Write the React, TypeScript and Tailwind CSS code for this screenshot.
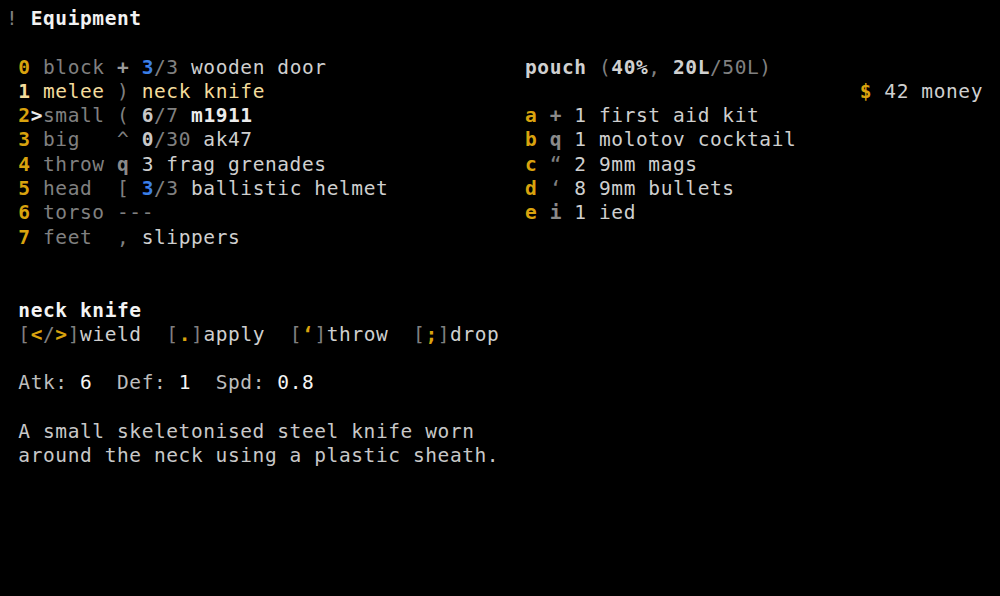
const gold = "text-[#d9a30e] font-bold";
const dim = "text-[#808080]";
const lite = "text-[#cfcfcf]";
const bright = "text-[#ececec] font-bold";
const blue = "text-[#3b7fe8] font-bold";
const pale = "text-[#f4dc9c]";

type Seg = [string, string];

function Line({ segs, className = "" }: { segs: Seg[]; className?: string }) {
  return (
    <div className={"h-[24.3px] leading-[24.3px] whitespace-pre " + className}>
      {segs.map(([t, c], i) => (
        <span key={i} className={c}>
          {t}
        </span>
      ))}
    </div>
  );
}

const slots: Seg[][] = [
  [["0", gold], [" block ", dim], ["+", "text-[#9a9a9a] font-bold"], [" ", lite], ["3", blue], ["/3", dim], [" wooden door", lite]],
  [["1", "text-[#f4dc9c] font-bold"], [" melee ", pale], [")", dim], [" neck knife", pale]],
  [["2", gold], [">", bright], ["small ", dim], ["(", dim], [" ", lite], ["6", "text-[#c8c8c8] font-bold"], ["/7", dim], [" ", lite], ["m1911", bright]],
  [["3", gold], [" big   ", dim], ["^", dim], [" ", lite], ["0", "text-[#c8c8c8] font-bold"], ["/30", dim], [" ak47", lite]],
  [["4", gold], [" throw ", dim], ["q", "text-[#8a8a8a] font-bold"], [" 3 frag grenades", lite]],
  [["5", gold], [" head  ", dim], ["[", dim], [" ", lite], ["3", blue], ["/3", dim], [" ballistic helmet", lite]],
  [["6", gold], [" torso ", dim], ["---", dim]],
  [["7", gold], [" feet  ", dim], [",", dim], [" slippers", lite]],
];

const pouch: Seg[][] = [
  [["a", gold], [" ", lite], ["+", "text-[#8a8a8a] font-bold"], [" 1 first aid kit", lite]],
  [["b", gold], [" ", lite], ["q", "text-[#8a8a8a] font-bold"], [" 1 molotov cocktail", lite]],
  [["c", gold], [" ", lite], ["\u201c", dim], [" 2 9mm mags", lite]],
  [["d", gold], [" ", lite], ["\u2018", dim], [" 8 9mm bullets", lite]],
  [["e", gold], [" ", lite], ["i", "text-[#8a8a8a] font-bold"], [" 1 ied", lite]],
];

export default function App() {
  return (
    <div
      className="w-[1000px] h-[596px] bg-black overflow-hidden pl-[6px] pt-[7px] text-[19.5px] tracking-[0.59px] text-[#cfcfcf]"
      style={{ fontFamily: '"DejaVu Sans Mono", "Liberation Mono", monospace' }}
    >
      <Line segs={[["! ", dim], ["Equipment", "text-[#f2f2f2] font-bold"]]} />
      <div className="h-[24.3px]" />
      <div className="flex">
        <div className="w-[519px] pl-[12.33px]">
          {slots.map((s, i) => (
            <Line key={i} segs={s} />
          ))}
        </div>
        <div className="w-[458px]">
          <Line
            segs={[
              ["pouch", "text-[#d0d0d0] font-bold"],
              [" (", dim],
              ["40%", "text-[#d0d0d0] font-bold"],
              [", ", dim],
              ["20L", "text-[#d0d0d0] font-bold"],
              ["/50L)", dim],
            ]}
          />
          <Line className="text-right" segs={[["$", gold], [" 42 money", lite]]} />
          {pouch.map((s, i) => (
            <Line key={i} segs={s} />
          ))}
        </div>
      </div>
      <div className="h-[48.6px]" />
      <div className="pl-[12.33px]">
        <Line segs={[["neck knife", "text-[#f4f4f4] font-bold"]]} />
        <Line
          segs={[
            ["[", dim], ["<", gold], ["/", dim], [">", gold], ["]", dim], ["wield  ", lite],
            ["[", dim], [".", gold], ["]", dim], ["apply  ", lite],
            ["[", dim], ["\u2018", gold], ["]", dim], ["throw  ", lite],
            ["[", dim], [";", gold], ["]", dim], ["drop", lite],
          ]}
        />
        <div className="h-[24.3px]" />
        <Line
          segs={[
            ["Atk: ", "text-[#bdbdbd]"], ["6", "text-[#f4f4f4]"],
            ["  Def: ", "text-[#bdbdbd]"], ["1", "text-[#f4f4f4]"],
            ["  Spd: ", "text-[#bdbdbd]"], ["0.8", "text-[#f4f4f4]"],
          ]}
        />
        <div className="h-[24.3px]" />
        <Line segs={[["A small skeletonised steel knife worn", "text-[#c8c8c8]"]]} />
        <Line segs={[["around the neck using a plastic sheath.", "text-[#c8c8c8]"]]} />
      </div>
    </div>
  );
}
